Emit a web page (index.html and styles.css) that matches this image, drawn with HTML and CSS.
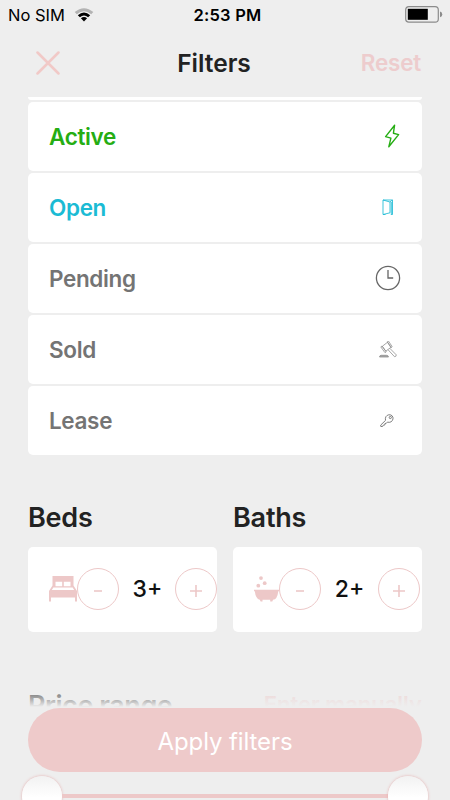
FILE: index.html
```html
<!DOCTYPE html>
<html lang="en">
<head>
<meta charset="utf-8">
<title>Filters</title>
<link rel="stylesheet" href="styles.css">
</head>
<body>
<div class="screen">
  <div class="status">
    <div class="carrier"><span>No SIM</span>
      <svg width="20" height="16" viewBox="0 0 20 16"><path d="M.7 5.1Q10-2.6 19.3 5.1L17.2 7.2Q10 1.2 2.8 7.2Z" fill="#b3b3b3"/><path d="M3.8 8.2Q10 2.6 16.2 8.2L14.1 10.3Q10 6.6 5.9 10.3Z"/><path d="M6.9 11.3Q10 8.6 13.1 11.3L10 14.5Z"/></svg>
    </div>
    <div class="time">2:53 PM</div>
    <svg class="battery" width="38" height="17" viewBox="0 0 38 17"><rect x=".7" y=".7" width="32.6" height="15.4" rx="3.2" fill="none" stroke="#8b8b8b" stroke-width="1.2"/><rect x="2.8" y="2.8" width="20" height="11"/><path d="M35 5.5Q37.3 6.2 37.3 8.4T35 11.3Z" fill="#8b8b8b"/></svg>
  </div>
  <header class="header">
    <svg class="close" width="24" height="24" viewBox="0 0 24 24"><path d="M1.5 1.5L22.5 22.5M22.5 1.5L1.5 22.5" stroke-width="2.5" stroke-linecap="round"/></svg>
    <h1 class="title">Filters</h1>
    <div class="reset">Reset</div>
  </header>
  <main class="content">
    <div class="list">
      <div class="row clipped"></div>
      <div class="row active"><span>Active</span>
        <svg width="16" height="24" viewBox="0 0 16 24"><path d="M10.6 1.2L1.6 12.6L6.9 14.2L4.8 22.8L14.6 10.6L9.4 9.2Z" fill="none" stroke="currentColor" stroke-width="1.4" stroke-linejoin="round"/></svg>
      </div>
      <div class="row open"><span>Open</span>
        <svg class="door" width="12" height="17" viewBox="0 0 12 17"><path d="M1 1H10.5V15.5H8.8M1 1V15.5L8 13.8V3L1 1M1 15.5H3.5M8 3L10.3 1M9.3 3V15" fill="none" stroke="currentColor" stroke-width=".85"/></svg>
      </div>
      <div class="row"><span>Pending</span>
        <svg class="clock" width="26" height="26" viewBox="0 0 26 26" fill="none" stroke="#666" stroke-width="1.3"><circle cx="13" cy="13" r="11.6"/><path d="M13 5V13H18.2"/></svg>
      </div>
      <div class="row"><span>Sold</span>
        <svg class="gavel" width="18" height="17" viewBox="0 0 18 17" fill="none" stroke="#8a8a8a" stroke-width=".75" stroke-linejoin="round"><path d="M3.3 5.3L8.6 1.2L12.1 6.2L6.8 10.2ZM1.8 5.9L3 5L7.2 10.8L6 11.7ZM8.2.9L9.4 0L13.2 5.7L12 6.6ZM9 8.7L15.5 15.7Q17.3 15.7 17.3 13.9L10.8 7.3"/><path d="M.5 16Q.7 14.3 2.2 14.3H7.6Q9.2 14.3 9.5 16Z" fill="#aaa"/></svg>
      </div>
      <div class="row"><span>Lease</span>
        <svg class="key" width="14" height="14" viewBox="0 0 14 14" fill="none" stroke="#777" stroke-width=".95" stroke-linejoin="round"><path d="M5.5 6.4C4.8 3.3 6.5 1.2 8.7.8C11.5.3 13.4 2.5 13 4.9C12.6 7.5 10 9 7.4 8.1L6.2 9.4H5L4.8 11L3.2 11.2L2.6 12.5H.8L.7 11.1Z"/><circle cx="10.3" cy="3.5" r="1.1"/></svg>
      </div>
    </div>
    <div class="rooms">
      <section>
        <h2>Beds</h2>
        <div class="counter">
          <svg class="bed" width="28" height="26" viewBox="0 0 28 26"><path fill="#edc8c8" fill-rule="evenodd" d="M3.5 0H24.5V9.5L28 15V25.5H26V21.5H2V25.5H0V15L3.5 9.5ZM6.5 5.7V10.3H13.2V5.7ZM14.8 5.7V10.3H21.5V5.7ZM4.4 11.5L2.8 14H25.2L23.6 11.5Z"/></svg>
          <div class="circle"><svg width="10" height="12"><path d="M1 6H9"/></svg></div>
          <div class="value">3+</div>
          <div class="circle"><svg width="14" height="14"><path d="M1 7H13M7 1V13"/></svg></div>
        </div>
      </section>
      <section>
        <h2>Baths</h2>
        <div class="counter">
          <svg class="bath" width="25" height="27" viewBox="0 0 25 27" fill="#edc8c8"><circle cx="7" cy="2.1" r="1.9"/><circle cx="10.7" cy="7.2" r="1.9"/><circle cx="4.3" cy="9.7" r="1.9"/><path d="M0 13.8H25V15.3H24.3Q23.3 23.6 19 23.8L18.3 25.6H16.2V23.8H8.5V25.6H6.6L5.8 23.8Q1.7 22.9.8 15.3H0Z"/></svg>
          <div class="circle"><svg width="10" height="12"><path d="M1 6H9"/></svg></div>
          <div class="value">2+</div>
          <div class="circle"><svg width="14" height="14"><path d="M1 7H13M7 1V13"/></svg></div>
        </div>
      </section>
    </div>
    <div class="price"><h2>Price range</h2><span>Enter manually</span></div>
    <div class="slider"><i></i><b></b><i></i></div>
  </main>
  <div class="fade"></div>
  <button class="apply"><span>Apply filters</span></button>
</div>
</body>
</html>
```
FILE: styles.css
```css
* { box-sizing: border-box; }
body { margin: 0; background: #eee; font-family: Inter, "Liberation Sans", sans-serif; color: #222; }
h1, h2 { margin: 0; font-weight: 600; }
svg { display: block; flex: none; }
.screen { position: relative; width: 450px; height: 800px; overflow: hidden; display: flex; flex-direction: column; background: #eee; }
.status { height: 28px; display: grid; grid-template-columns: 1fr auto 1fr; align-items: center; padding: 1px 7px 0 8px; color: #000; }
.carrier { display: flex; align-items: center; gap: 9px; font-size: 16.5px; letter-spacing: 0; white-space: nowrap; }
.time { font-size: 16.5px; font-weight: 600; letter-spacing: .2px; margin-left: 4px; }
.battery { justify-self: end; }
.header { height: 69px; display: grid; grid-template-columns: 1fr auto 1fr; align-items: center; padding: 0 29px 0 36px; }
.close { stroke: #f1c9c7; }
.title { font-size: 24.5px; letter-spacing: 0; margin-right: 29px; padding-top: 1px; }
.reset { justify-self: end; font-size: 22.5px; font-weight: 600; color: #edcccd; letter-spacing: -.2px; }
.content { flex: 1; overflow: hidden; padding: 0 28px; }
.list { display: grid; gap: 2px; }
.row { height: 69.1px; background: #fff; border-radius: 5px; padding: 0 22px 0 21px; display: flex; align-items: center; justify-content: space-between; font-size: 22.5px; font-weight: 600; color: #747474; letter-spacing: -.35px; }
.row.clipped { height: 2.6px; border-radius: 0 0 5px 5px; }
.row.active { color: #25ad13; }
.row.open { color: #1bbbd4; }
.door { margin-right: 6px; }
.clock { margin-right: -1px; }
.gavel { margin-right: 3px; }
.key { margin-right: 6px; }
.rooms { display: grid; grid-template-columns: 189px 189px; gap: 16px; margin-top: 44px; }
h2 { font-size: 27px; line-height: 38px; letter-spacing: -.2px; }
.counter { height: 85px; margin-top: 10px; background: #fff; border-radius: 5px; padding: 0 0 1px 21px; display: flex; align-items: center; white-space: nowrap; }
.circle { width: 42px; height: 42px; flex: none; border: 1.5px solid #edc8c8; border-radius: 50%; display: grid; place-items: center; padding-top: 3px; }
.circle svg { fill: none; stroke: #edc8c8; stroke-width: 1.6; }
.value { width: 57px; text-align: center; font-size: 23px; font-weight: 500; color: #111; }
.bed ~ .value { width: 57.6px; padding-left: 1px; }
.price { display: flex; justify-content: space-between; margin-top: 55px; height: 38px; align-items: center; font-weight: 600; white-space: nowrap; }
.price h2 { letter-spacing: -.45px; }
.price span { font-size: 22px; color: #edc8c8; margin-top: -4px; }
.slider { height: 42px; margin: 50px -6px 0; display: flex; align-items: center; }
.slider i { width: 40px; height: 40px; border-radius: 50%; background: linear-gradient(#f2f2f2, #fff 55%); box-shadow: 0 0 3px #e5aaaa; flex: none; }
.slider b { flex: 1; height: 4px; background: #edc8c8; }
.fade { position: absolute; left: 0; right: 0; top: 682px; height: 40px; background: linear-gradient(#eee0, #eee 25px); }
.apply { position: absolute; left: 28px; top: 708px; width: 394px; height: 64px; border: 0; border-radius: 32px; background: #eecaca; color: #fff; font: 24px Inter, sans-serif; letter-spacing: -.1px; padding: 2px 0 0; }
```
